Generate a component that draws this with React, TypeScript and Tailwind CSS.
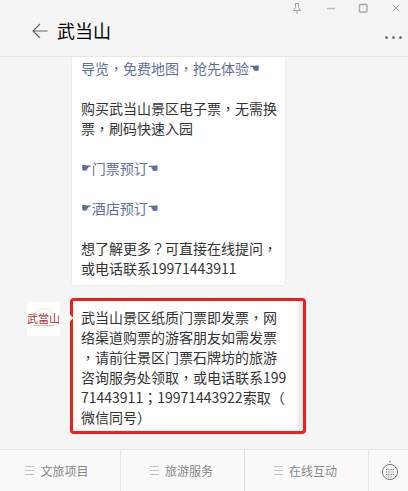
import React from "react";

const F = '"Noto Sans CJK SC", "Liberation Sans", sans-serif';

function Hand({ dir }: { dir: "l" | "r" }) {
  return (
    <span className="inline-block h-5 align-top text-[#5b6b9b] text-[12px] leading-[20px] font-['DejaVu_Sans']">
      {dir === "r" ? "☛" : "☚"}
    </span>
  );
}

// Centred full-width punctuation, as in the reference's system font
function P({ c }: { c: string }) {
  return <span className="font-['Noto_Sans_CJK_TC']">{c}</span>;
}

function Line({ children, link }: { children: React.ReactNode; link?: boolean }) {
  return <div className={link ? "h-5 overflow-visible text-[#5f7199]" : "h-5 overflow-visible"}>{children}</div>;
}

function TabBody({ label }: { label: string }) {
  return (
    <>
      <svg width="10" height="9" viewBox="0 0 10 9" className="shrink-0">
        <path d="M0 .5h9M0 4.5h9M0 8.5h9" stroke="#c4c4c4" strokeWidth="1" fill="none" />
      </svg>
      <span className="text-[#868686] text-[12px] leading-5">{label}</span>
    </>
  );
}

export default function App() {
  return (
    <div className="w-[408px] h-[491px] bg-[#f5f5f5] flex flex-col overflow-hidden" style={{ fontFamily: F }}>
      <header className="h-[57px] shrink-0 border-b border-[#e5e5e5] relative flex items-center pl-[32px] pt-[5px]">
        <svg width="16" height="16" viewBox="0 0 16 16" className="shrink-0">
          <path d="M15.5 8H1M8 1 1 8l7 7" stroke="#666" strokeWidth="1.2" fill="none" />
        </svg>
        <span className="ml-[9px] text-[18px] leading-6 text-black -mt-[2px]">武当山</span>
        <div className="absolute top-[3px] right-[6px] flex items-center gap-[21px]">
          <svg width="10" height="11" viewBox="0 0 10 11">
            <path d="M3 .5h4M3.5.5v4L1.5 7.5h7L6.5 4.5v-4M5 7.5v3.5" stroke="#a3a3a3" fill="none" />
          </svg>
          <svg width="11" height="11" viewBox="0 0 11 11" className="ml-[3px]">
            <path d="M1 5.5h8" stroke="#bcbcbc" strokeWidth="1.5" fill="none" />
          </svg>
          <svg width="11" height="11" viewBox="0 0 11 11">
            <rect x="1.5" y="1.5" width="7.5" height="7.5" rx="1" stroke="#a8a8a8" strokeWidth="1.4" fill="none" />
          </svg>
          <svg width="11" height="11" viewBox="0 0 11 11" className="ml-[1px]">
            <path d="M1.5 1.5l7 7M8.5 1.5l-7 7" stroke="#a3a3a3" strokeWidth="1" fill="none" />
          </svg>
        </div>
        <div className="absolute top-[36px] right-[6px] flex gap-[4px]">
          <span className="w-[3px] h-[3px] rounded-full bg-[#777]" />
          <span className="w-[3px] h-[3px] rounded-full bg-[#777]" />
          <span className="w-[3px] h-[3px] rounded-full bg-[#777]" />
        </div>
      </header>

      <main className="flex-1 min-h-0 flex flex-col overflow-hidden">
        <div className="ml-[71px] w-[215px] h-[229px] shrink-0 bg-white rounded-b-[3px] border border-t-0 border-[#ededed] pl-[9px] pt-[1px] text-[14px] leading-[20px] text-[#333] whitespace-nowrap">
          <Line link>导览<P c="，" />免费地图<P c="，" />抢先体验<Hand dir="l" /></Line>
          <div className="h-5" />
          <Line>购买武当山景区电子票<P c="，" />无需换</Line>
          <Line>票<P c="，" />刷码快速入园</Line>
          <div className="h-5" />
          <Line link><Hand dir="r" />门票预订<Hand dir="l" /></Line>
          <div className="h-5" />
          <Line link><Hand dir="r" />酒店预订<Hand dir="l" /></Line>
          <div className="h-5" />
          <Line>想了解更多<P c="？" />可直接在线提问<P c="，" /></Line>
          <Line>或电话联系19971443911</Line>
        </div>

        <div className="mt-[12px] flex items-start">
          <div className="ml-[27px] mt-[4px] w-[33px] h-[34px] shrink-0 bg-white rounded-[3px] flex flex-col items-center justify-center overflow-hidden relative">
            <span className="absolute w-[20px] h-[20px] rounded-full border border-[#eee5d3] left-[7px] top-[6px]" />
            <span className="relative text-[11px] leading-[12px] text-[#a8333a] whitespace-nowrap">武當山</span>
            <span className="relative mt-[1px] w-[20px] h-px bg-[#e3b6b6]" />
          </div>
          <div className="ml-[10px] w-[236px] h-[136px] shrink-0 border-[3px] border-[#f51c1c] rounded-[4px] bg-[#ececec] pr-[5px] relative">
            <span className="absolute left-[-7px] top-[14px] w-[6px] h-[6px] bg-white rotate-45" />
            <div className="h-full bg-white pl-[8px] pt-[6px] text-[14px] leading-[20px] text-[#333] whitespace-nowrap">
              <Line>武当山景区纸质门票即发票<P c="，" />网</Line>
              <Line>络渠道购票的游客朋友如需发票</Line>
              <Line><P c="，" />请前往景区门票石牌坊的旅游</Line>
              <Line>咨询服务处领取<P c="，" />或电话联系199</Line>
              <Line>71443911<P c="；" />19971443922索取（</Line>
              <Line>微信同号）</Line>
            </div>
          </div>
        </div>
      </main>

      <footer className="h-[42px] shrink-0 border-t border-[#e4e4e4] bg-[#fafafa] flex items-center">
        <div className="w-[121px] shrink-0 h-full border-r border-[#e4e4e4] flex items-center justify-center gap-[5px] pr-[6px]">
          <TabBody label="文旅项目" />
        </div>
        <div className="w-[124px] shrink-0 h-full border-r border-[#e4e4e4] flex items-center justify-center gap-[5px] pr-[2px]">
          <TabBody label="旅游服务" />
        </div>
        <div className="w-[124px] shrink-0 h-full border-r border-[#e4e4e4] flex items-center justify-center gap-[5px] pr-[2px]">
          <TabBody label="在线互动" />
        </div>
        <div className="flex-1 flex items-center justify-center pl-[3px]">
          <svg width="18" height="22" viewBox="0 0 18 22">
            <circle cx="9" cy="1.5" r="0.8" fill="#777" />
            <circle cx="9" cy="12" r="7.6" stroke="#777" strokeWidth="1" fill="none" />
            <path d="M5 9.5h8M5 12h8M5 14.5h8M7 17h4" stroke="#888" strokeWidth="1" strokeDasharray="1.5 0.7" fill="none" />
          </svg>
        </div>
      </footer>
    </div>
  );
}
